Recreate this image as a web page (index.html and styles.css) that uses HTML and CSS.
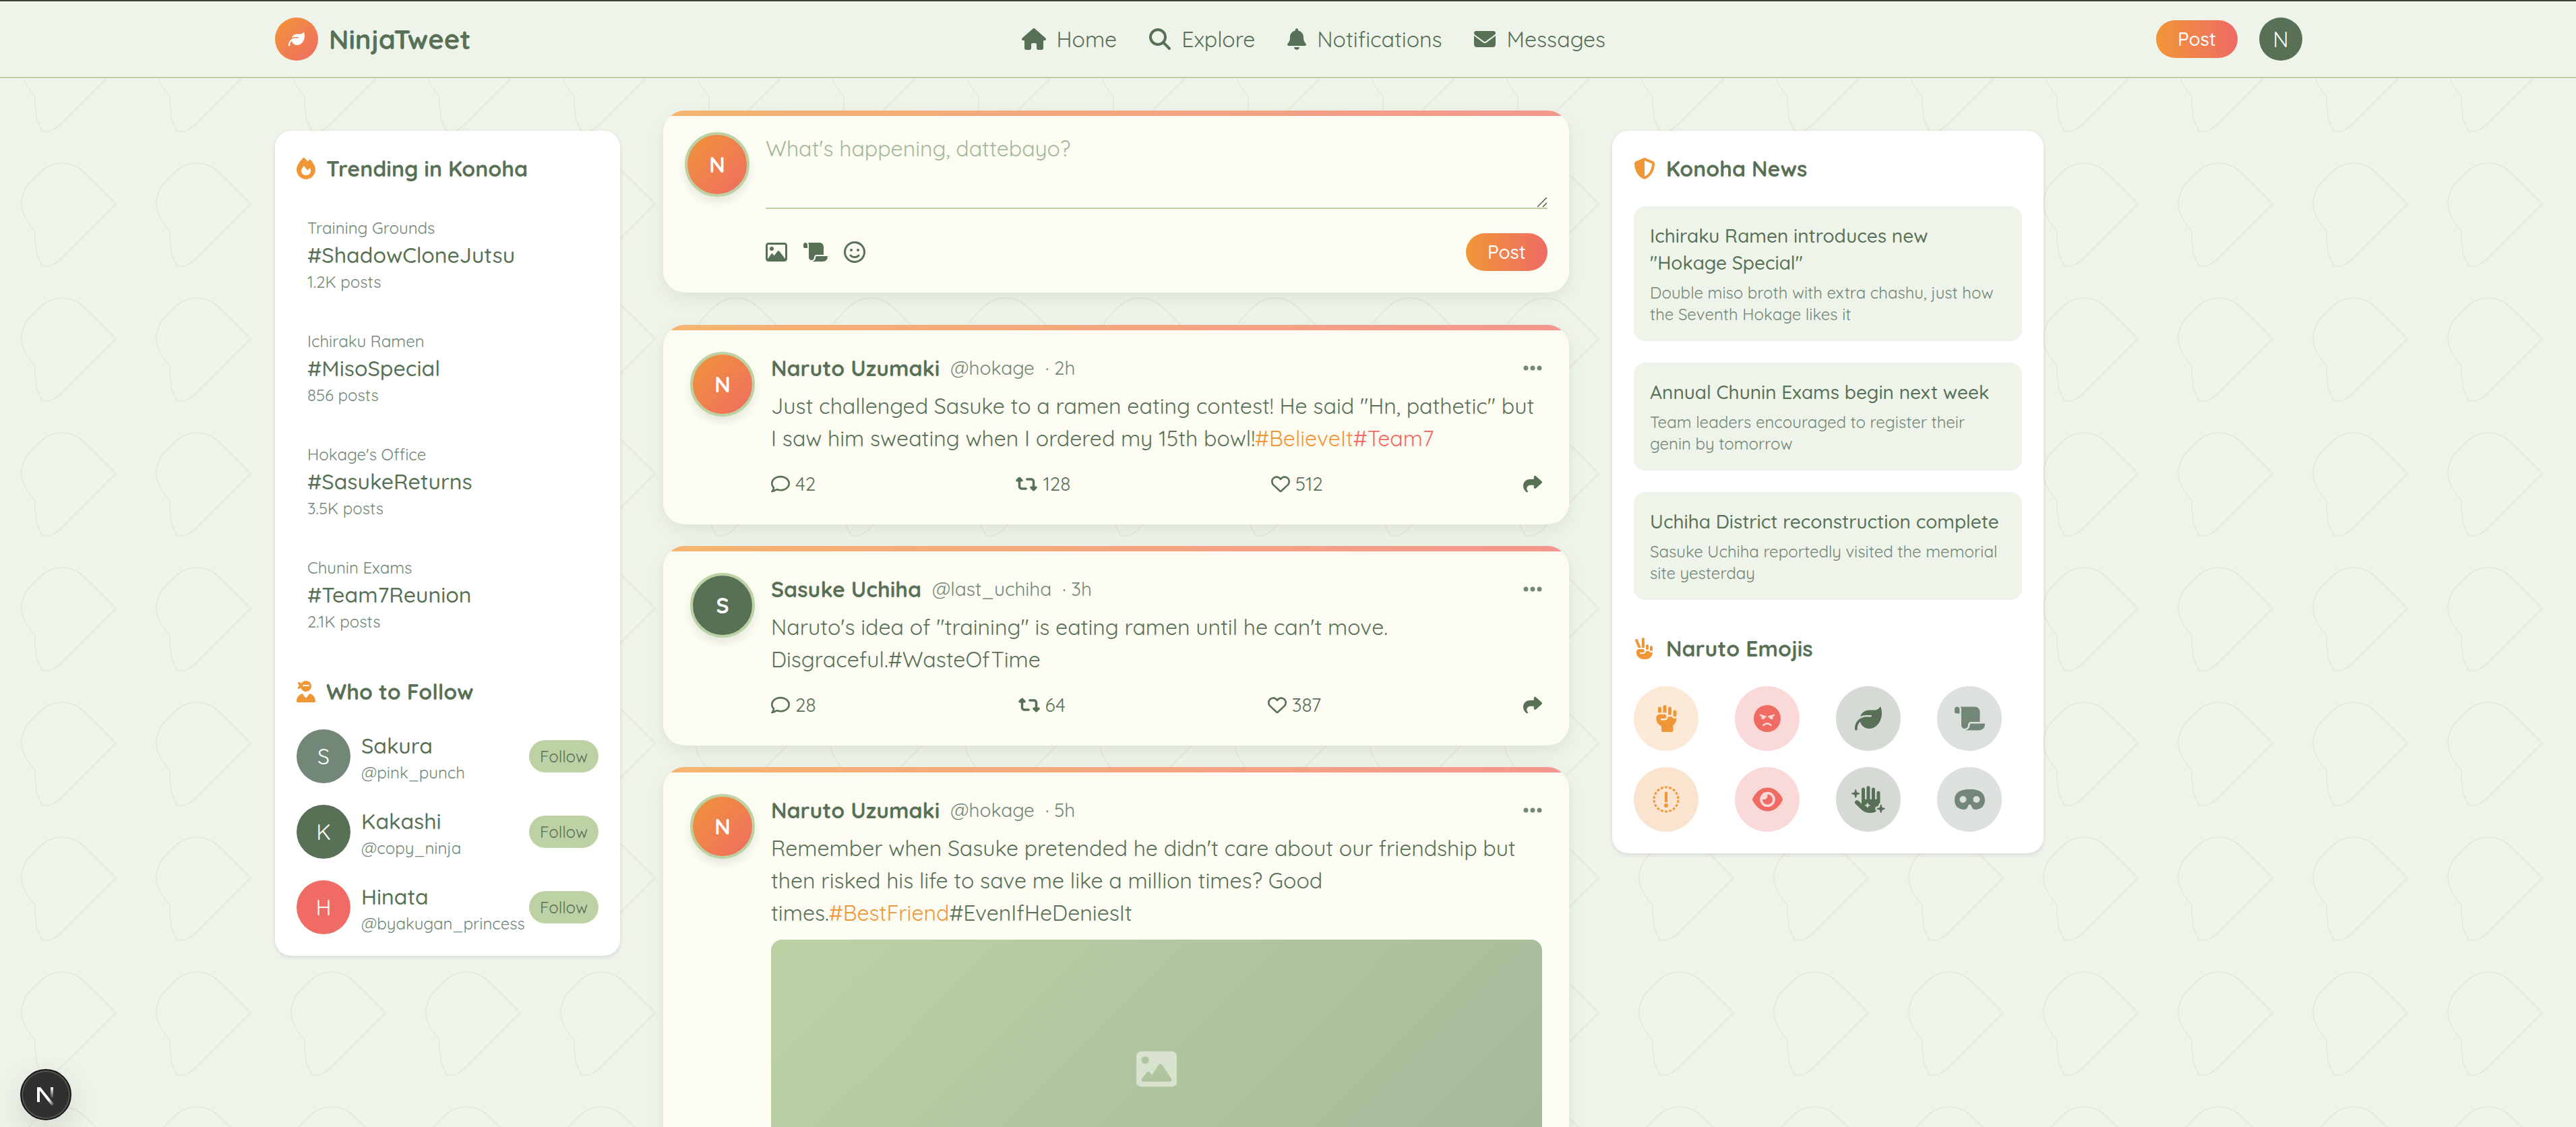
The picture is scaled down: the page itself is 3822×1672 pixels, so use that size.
FILE: index.html
```
<!DOCTYPE html>
<html lang="en">
<head>
<meta charset="utf-8">
<meta name="viewport" content="width=device-width, initial-scale=1">
<title>NinjaTweet</title>
<link rel="stylesheet" href="styles.css">
</head>
<body>
<svg class="sprite" aria-hidden="true">
  <symbol id="i-house" viewBox="0 0 576 512"><path d="M575.8 255.5c0 18-15 32.1-32 32.1h-32l.7 160.2c0 2.7-.2 5.4-.5 8.1V472c0 22.1-17.9 40-40 40H456c-1.1 0-2.2 0-3.3-.1c-1.4 .1-2.8 .1-4.2 .1H416 392c-22.1 0-40-17.9-40-40V448 384c0-17.7-14.3-32-32-32H256c-17.7 0-32 14.3-32 32v64 24c0 22.1-17.9 40-40 40H160 128.1c-1.5 0-3-.1-4.5-.2c-1.2 .1-2.4 .2-3.6 .2H104c-22.1 0-40-17.9-40-40V360c0-.9 0-1.9 .1-2.8V287.6H32c-18 0-32-14-32-32.1c0-9 3-17 10-24L266.4 8c7-7 15-8 22-8s15 2 21 7L564.8 231.5c8 7 12 15 11 24z"/></symbol>
  <symbol id="i-search" viewBox="0 0 512 512"><path d="M416 208c0 45.9-14.9 88.3-40 122.7L502.6 457.4c12.5 12.5 12.5 32.8 0 45.3s-32.8 12.5-45.3 0L330.7 376c-34.4 25.2-76.8 40-122.7 40C93.1 416 0 322.9 0 208S93.1 0 208 0S416 93.1 416 208zM208 352a144 144 0 1 0 0-288 144 144 0 1 0 0 288z"/></symbol>
  <symbol id="i-bell" viewBox="0 0 448 512"><path d="M224 0c-17.7 0-32 14.3-32 32V51.2C119 66 64 130.6 64 208v18.8c0 47-17.3 92.4-48.5 127.6l-7.4 8.3c-8.4 9.4-10.4 22.9-5.3 34.4S19.4 416 32 416H416c12.6 0 24-7.4 29.2-18.9s3.1-25-5.3-34.4l-7.4-8.3C401.3 319.2 384 273.9 384 226.8V208c0-77.4-55-142-128-156.8V32c0-17.7-14.3-32-32-32zm45.3 493.3c12-12 18.7-28.3 18.7-45.3H224 160c0 17 6.7 33.3 18.7 45.3s28.3 18.7 45.3 18.7s33.3-6.7 45.3-18.7z"/></symbol>
  <symbol id="i-envelope" viewBox="0 0 512 512"><path d="M48 64C21.5 64 0 85.5 0 112c0 15.1 7.1 29.3 19.2 38.4L236.8 313.6c11.4 8.5 27 8.5 38.4 0L492.8 150.4c12.1-9.1 19.2-23.3 19.2-38.4c0-26.5-21.5-48-48-48H48zM0 176V384c0 35.3 28.7 64 64 64H448c35.3 0 64-28.7 64-64V176L294.4 339.2c-22.8 17.1-54 17.1-76.8 0L0 176z"/></symbol>
  <symbol id="i-leaf" viewBox="0 0 512 512"><path d="M272 96c-78.6 0-145.1 51.5-167.7 122.5c33.6-17 71.5-26.5 111.7-26.5h88c8.8 0 16 7.2 16 16s-7.2 16-16 16H288 216s0 0 0 0c-16.6 0-32.7 1.9-48.3 5.4c-25.9 5.9-49.9 16.4-71.4 30.7c0 0 0 0 0 0C38.3 298.8 0 364.9 0 440v16c0 13.3 10.7 24 24 24s24-10.7 24-24V440c0-48.7 20.7-92.5 53.8-123.2C121.6 392.3 190.3 448 272 448l1 0c132.1-.7 239-130.9 239-291.4c0-42.6-7.5-83.1-21.1-119.6c-2.6-6.9-12.7-6.6-16.2-.1C455.9 72.1 418.7 96 376 96L272 96z"/></symbol>
  <symbol id="i-fire" viewBox="0 0 448 512"><path d="M159.3 5.4c7.8-7.3 19.9-7.2 27.7 .1c27.6 25.9 53.5 53.8 77.7 84c11-14.4 23.5-30.1 37-42.9c7.9-7.4 20.1-7.4 28 .1c34.6 33 63.9 76.6 84.5 118c20.3 40.8 33.8 82.5 33.8 111.9C448 404.2 348.2 512 224 512C98.4 512 0 404.1 0 276.5c0-38.4 17.8-85.3 45.4-131.7C73.3 97.7 112.7 48.6 159.3 5.4zM225.7 416c25.3 0 47.7-7 68.8-21c42.1-29.4 53.4-88.2 28.1-134.4c-4.5-9-16-9.6-22.5-2l-25.2 29.3c-6.6 7.6-18.5 7.4-24.7-.5c-16.5-21-46-58.5-62.8-79.8c-6.3-8-18.3-8.1-24.7-.1c-33.8 42.5-50.8 69.3-50.8 99.4C112 375.4 162.6 416 225.7 416z"/></symbol>
  <symbol id="i-ninja" viewBox="0 0 448 512"><path fill-rule="evenodd" d="M224 256c-57.2 0-105.6-37.5-122-89.3c-1.1 1.3-2.2 2.6-3.5 3.8c-15.8 15.5-38.8 20.7-53.6 22.1c-8.1 .8-14.6-5.7-13.8-13.8c1.4-14.7 6.6-37.8 22.1-53.6c5.8-5.9 12.6-10.1 19.6-13.4c-7-3.2-13.8-7.6-19.6-13.4C37.4 82.7 32.6 59.7 31.1 44.9c-.8-8.1 5.7-14.6 13.8-13.8c14.7 1.4 37.8 6.6 53.6 22.1c4.8 4.9 8.7 10.6 11.7 16.4C130.9 28.1 174.2 0 224 0c70.7 0 128 57.3 128 128s-57.3 128-128 128zM0 482.3C0 399.5 56.4 330 132.8 309.9c6-1.6 12.2 .9 15.9 5.8l62.5 83.3c6.4 8.5 19.2 8.5 25.6 0l62.5-83.3c3.7-4.9 9.9-7.4 15.9-5.8C391.6 330 448 399.5 448 482.3c0 16.4-13.3 29.7-29.7 29.7H29.7C13.3 512 0 498.7 0 482.3zM160 96c-8.8 0-16 7.2-16 16s7.2 16 16 16H288c8.8 0 16-7.2 16-16s-7.2-16-16-16H160z"/></symbol>
  <symbol id="i-shield" viewBox="0 0 512 512"><path fill-rule="evenodd" d="M256 0c4.6 0 9.2 1 13.4 2.9L457.7 82.8c22 9.3 38.4 31 38.3 57.2c-.5 99.2-41.3 280.7-213.6 363.2c-16.7 8-36.1 8-52.8 0C57.3 420.7 16.5 239.2 16 140c-.1-26.2 16.3-47.9 38.3-57.2L242.7 2.9C246.8 1 251.4 0 256 0zm0 66.8V444.8C394 378 431.1 230.1 432 141.4L256 66.8l0 0z"/></symbol>
  <symbol id="i-peace" viewBox="0 0 512 512"><path d="M224 0c17.7 0 32 14.3 32 32V240H192V32c0-17.7 14.3-32 32-32zm96 160c17.7 0 32 14.3 32 32v64c0 17.7-14.3 32-32 32s-32-14.3-32-32V192c0-17.7 14.3-32 32-32zm64 64c0-17.7 14.3-32 32-32s32 14.3 32 32v64c0 17.7-14.3 32-32 32s-32-14.3-32-32V224zM93.3 51.2L175.9 240H106.1L34.7 76.8C27.6 60.6 35 41.8 51.2 34.7s35.1 .3 42.1 16.5zm27 221.3l-.2-.5h69.9H216c22.1 0 40 17.9 40 40s-17.9 40-40 40H160c-8.8 0-16 7.2-16 16s7.2 16 16 16h56c39.8 0 72-32.2 72-72l0-.6c9.4 5.4 20.3 8.6 32 8.6c13.2 0 25.4-4 35.6-10.8c8.7 24.9 32.5 42.8 60.4 42.8c11.7 0 22.6-3.1 32-8.6V352c0 88.4-71.6 160-160 160H226.3c-42.4 0-83.1-16.9-113.1-46.9l-11.6-11.6C77.5 429.5 64 396.9 64 363V336c0-32.7 24.6-59.7 56.3-63.5z"/></symbol>
  <symbol id="i-scroll" viewBox="0 0 576 512"><path d="M0 80v48c0 17.7 14.3 32 32 32H48 96V80c0-26.5-21.5-48-48-48S0 53.5 0 80zM112 32c10 13.4 16 30 16 48V384c0 35.3 28.7 64 64 64s64-28.7 64-64v-5.3c0-32.4 26.3-58.7 58.7-58.7H480V128c0-53-43-96-96-96H112zM464 480c61.9 0 112-50.1 112-112c0-8.8-7.2-16-16-16H314.7c-14.7 0-26.7 11.9-26.7 26.7V384c0 53-43 96-96 96H368h96z"/></symbol>
  <symbol id="i-smile" viewBox="0 0 512 512"><path d="M464 256A208 208 0 1 0 48 256a208 208 0 1 0 416 0zM0 256a256 256 0 1 1 512 0A256 256 0 1 1 0 256zm177.6 62.1C192.8 334.5 218.8 352 256 352s63.2-17.5 78.4-33.9c9-9.7 24.2-10.4 33.9-1.4s10.4 24.2 1.4 33.9c-22 23.8-60 49.4-113.6 49.4s-91.7-25.5-113.6-49.4c-9-9.7-8.4-24.9 1.4-33.9s24.9-8.4 33.9 1.4zM144.4 208a32 32 0 1 1 64 0 32 32 0 1 1 -64 0zm192-32a32 32 0 1 1 0 64 32 32 0 1 1 0-64z"/></symbol>
  <symbol id="i-image" viewBox="0 0 512 512"><path d="M448 80c8.8 0 16 7.2 16 16V415.8l-5-6.5-136-176c-4.5-5.9-11.6-9.3-19-9.3s-14.4 3.4-19 9.3L202 340.7l-30.5-42.7C167 291.7 159.8 288 152 288s-15 3.7-19.5 10.1l-80 112L48 416.3l0-.3V96c0-8.8 7.2-16 16-16H448zM64 32C28.7 32 0 60.7 0 96V416c0 35.3 28.7 64 64 64H448c35.3 0 64-28.7 64-64V96c0-35.3-28.7-64-64-64H64zm80 192a48 48 0 1 0 0-96 48 48 0 1 0 0 96z"/></symbol>
  <symbol id="i-image-solid" viewBox="0 0 512 512"><path fill-rule="evenodd" d="M0 96C0 60.7 28.7 32 64 32H448c35.3 0 64 28.7 64 64V416c0 35.3-28.7 64-64 64H64c-35.3 0-64-28.7-64-64V96zM323.8 202.5c-4.5-6.6-11.9-10.5-19.8-10.5s-15.4 3.9-19.8 10.5l-87 127.6L170.7 297c-4.6-5.7-11.5-9-18.7-9s-14.2 3.3-18.7 9l-64 80c-5.8 7.2-6.9 17.1-2.9 25.4s12.4 13.6 21.6 13.6h96 32H424c8.9 0 17.1-4.9 21.2-12.8s3.6-17.4-1.4-24.7l-120-176zM112 192a48 48 0 1 0 0-96 48 48 0 1 0 0 96z"/></symbol>
  <symbol id="i-dots" viewBox="0 0 448 512"><path d="M8 256a56 56 0 1 1 112 0A56 56 0 1 1 8 256zm160 0a56 56 0 1 1 112 0 56 56 0 1 1 -112 0zm216-56a56 56 0 1 1 0 112 56 56 0 1 1 0-112z"/></symbol>
  <symbol id="i-comment" viewBox="0 0 512 512"><path d="M123.6 391.3c12.9-9.4 29.6-11.8 44.6-6.4c26.5 9.6 56.2 15.1 87.8 15.1c124.7 0 208-80.5 208-160s-83.3-160-208-160S48 160.5 48 240c0 32 12.4 62.8 35.7 89.2c8.6 9.7 12.8 22.5 11.8 35.5c-1.4 18.1-5.7 34.7-11.3 49.4c17-7.9 31.1-16.7 39.4-22.7zM21.2 431.9c1.8-2.7 3.5-5.4 5.1-8.1c10-16.6 19.5-38.4 21.4-62.9C17.7 326.8 0 285.1 0 240C0 125.1 114.6 32 256 32s256 93.1 256 208s-114.6 208-256 208c-37.1 0-72.3-6.4-104.1-17.9c-11.9 8.7-31.3 20.6-54.3 30.6c-15.1 6.6-32.3 12.6-50.1 16.1c-.8 .2-1.6 .3-2.4 .5c-4.4 .8-8.7 1.5-13.2 1.9c-.2 0-.5 .1-.7 .1c-5.1 .5-10.2 .8-15.3 .8c-6.5 0-12.3-3.9-14.8-9.9c-2.5-6-1.1-12.8 3.4-17.4c4.1-4.2 7.8-8.7 11.3-13.5c1.7-2.3 3.3-4.6 4.8-6.9c.1-.2 .2-.3 .3-.5z"/></symbol>
  <symbol id="i-retweet" viewBox="0 0 576 512"><path d="M272 416c17.7 0 32-14.3 32-32s-14.3-32-32-32H160c-17.7 0-32-14.3-32-32V192h32c12.9 0 24.6-7.8 29.6-19.8s2.2-25.7-6.9-34.9l-64-64c-12.5-12.5-32.8-12.5-45.3 0l-64 64c-9.2 9.2-11.9 22.9-6.9 34.9s16.6 19.8 29.6 19.8l32 0 0 128c0 53 43 96 96 96H272zM304 96c-17.7 0-32 14.3-32 32s14.3 32 32 32l112 0c17.7 0 32 14.3 32 32l0 128H416c-12.9 0-24.6 7.8-29.6 19.8s-2.2 25.7 6.9 34.9l64 64c12.5 12.5 32.8 12.5 45.3 0l64-64c9.2-9.2 11.9-22.9 6.9-34.9s-16.6-19.8-29.6-19.8l-32 0V192c0-53-43-96-96-96L304 96z"/></symbol>
  <symbol id="i-heart" viewBox="0 0 512 512"><path d="M225.8 468.2l-2.5-2.3L48.1 303.2C17.4 274.7 0 234.7 0 192.8v-3.3c0-70.4 50-130.8 119.2-144C158.6 37.9 198.9 47 231 69.6c9 6.4 17.4 13.8 25 22.3c4.2-4.8 8.7-9.2 13.5-13.3c3.7-3.2 7.5-6.2 11.5-9c0 0 0 0 0 0C313.1 47 353.4 37.9 392.8 45.4C462 58.6 512 119.1 512 189.5v3.3c0 41.9-17.4 81.9-48.1 110.4L288.7 465.9l-2.5 2.3c-8.2 7.6-19 11.9-30.2 11.9s-22-4.2-30.2-11.9zM239.1 145c-.4-.3-.7-.7-1-1.1l-17.8-20c0 0-.1-.1-.1-.1c0 0 0 0 0 0c-23.1-25.9-58-37.7-92-31.2C81.6 101.5 48 142.1 48 189.5v3.3c0 28.5 11.9 55.8 32.8 75.2L256 430.7 431.2 268c20.9-19.4 32.8-46.7 32.8-75.2v-3.3c0-47.3-33.6-88-80.1-96.9c-34-6.5-69 5.4-92 31.2c0 0 0 0-.1 .1s0 0-.1 .1l-17.8 20c-.3 .4-.7 .7-1 1.1c-4.5 4.5-10.6 7-16.9 7s-12.4-2.5-16.9-7z"/></symbol>
  <symbol id="i-share" viewBox="0 0 512 512"><path d="M307 34.8c-11.5 5.1-19 16.6-19 29.2v64H176C78.8 128 0 206.8 0 304C0 417.3 81.5 467.9 100.2 478.1c2.5 1.4 5.3 1.9 8.1 1.9c10.9 0 19.7-8.9 19.7-19.7c0-7.5-4.3-14.4-9.8-19.5C108.8 431.9 96 414.4 96 384c0-53 43-96 96-96h96v64c0 12.6 7.4 24.1 19 29.2s25 3 34.4-5.4l160-144c6.7-6.1 10.6-14.7 10.6-23.8s-3.8-17.7-10.6-23.8l-160-144c-9.4-8.5-22.9-10.6-34.4-5.4z"/></symbol>
  <symbol id="i-fist" viewBox="0 0 448 512"><path d="M192 0c17.7 0 32 14.3 32 32V144H160V32c0-17.7 14.3-32 32-32zM64 64c0-17.7 14.3-32 32-32s32 14.3 32 32v80H64V64zm192 0c0-17.7 14.3-32 32-32s32 14.3 32 32v96c0 17.7-14.3 32-32 32s-32-14.3-32-32V64zm96 64c0-17.7 14.3-32 32-32s32 14.3 32 32v64c0 17.7-14.3 32-32 32s-32-14.3-32-32V128zm-96 88l0-.6c9.4 5.4 20.3 8.6 32 8.6c13.2 0 25.4-4 35.6-10.8c8.7 24.9 32.5 42.8 60.4 42.8c11.7 0 22.6-3.1 32-8.6V256c0 52.3-25.1 98.8-64 128v96c0 17.7-14.3 32-32 32H160c-17.7 0-32-14.3-32-32V401.6c-17.3-7.9-33.2-18.8-46.9-32.5L69.5 357.5C45.5 333.5 32 300.9 32 267V240c0-35.3 28.7-64 64-64h88c22.1 0 40 17.9 40 40s-17.9 40-40 40H128c-8.8 0-16 7.2-16 16s7.2 16 16 16h56c39.8 0 72-32.2 72-72z"/></symbol>
  <symbol id="i-angry" viewBox="0 0 512 512"><path fill-rule="evenodd" d="M0 256a256 256 0 1 1 512 0A256 256 0 1 1 0 256zM338.7 395.9c6.6-5.9 7.1-16 1.2-22.6C323.8 355.4 295.7 336 256 336s-67.8 19.4-83.9 37.3c-5.9 6.6-5.4 16.7 1.2 22.6s16.7 5.4 22.6-1.2c11.7-13 31.6-26.7 60.1-26.7s48.4 13.7 60.1 26.7c5.9 6.6 16 7.1 22.6 1.2zM176.4 272c17.7 0 32-14.3 32-32c0-1.5-.1-3-.3-4.4l10.9 3.6c8.4 2.8 17.4-1.7 20.2-10.1s-1.7-17.4-10.1-20.2l-96-32c-8.4-2.8-17.4 1.7-20.2 10.1s1.7 17.4 10.1 20.2l30.7 10.2c-5.8 5.8-9.3 13.8-9.3 22.6c0 17.7 14.3 32 32 32zm192-32c0-8.9-3.6-17-9.5-22.8l30.2-10.1c8.4-2.8 12.9-11.9 10.1-20.2s-11.9-12.9-20.2-10.1l-96 32c-8.4 2.8-12.9 11.9-10.1 20.2s11.9 12.9 20.2 10.1l11.7-3.9c-.2 1.5-.3 3.1-.3 4.7c0 17.7 14.3 32 32 32s32-14.3 32-32z"/></symbol>
  <symbol id="i-alert" viewBox="0 0 40 40"><circle cx="20" cy="20" r="18" fill="none" stroke="currentColor" stroke-width="3" pathLength="180" stroke-dasharray="6 4" stroke-dashoffset="-2"/><path d="M18 9h4v15h-4z"/><circle cx="20" cy="29" r="3"/></symbol>
  <symbol id="i-eye" viewBox="0 0 576 512"><path fill-rule="evenodd" d="M288 32c-80.8 0-145.5 36.8-192.6 80.6C48.6 156 17.3 208 2.5 243.7c-3.3 7.9-3.3 16.7 0 24.6C17.3 304 48.6 356 95.4 399.4C142.5 443.2 207.2 480 288 480s145.5-36.8 192.6-80.6c46.8-43.5 78.1-95.4 93-131.1c3.3-7.9 3.3-16.7 0-24.6c-14.9-35.7-46.2-87.7-93-131.1C433.5 68.8 368.8 32 288 32zM144 256a144 144 0 1 1 288 0 144 144 0 1 1 -288 0zm144-64c0 35.3-28.7 64-64 64c-7.1 0-13.9-1.2-20.3-3.3c-5.5-1.8-11.9 1.6-11.7 7.4c.3 6.9 1.3 13.8 3.2 20.7c13.7 51.2 66.4 81.6 117.6 67.9s81.6-66.4 67.9-117.6c-11.1-41.5-47.8-69.4-88.6-71.1c-5.8-.2-9.2 6.1-7.4 11.7c2.1 6.4 3.3 13.2 3.3 20.3z"/></symbol>
  <symbol id="i-sparkles" viewBox="0 0 640 512"><path fill-rule="evenodd" d="M320 0c17.7 0 32 14.3 32 32V240c0 8.8 7.2 16 16 16s16-7.2 16-16V64c0-17.7 14.3-32 32-32s32 14.3 32 32V240c0 8.8 7.2 16 16 16s16-7.2 16-16V128c0-17.7 14.3-32 32-32s32 14.3 32 32V323.1c-11.9 4.8-21.3 14.9-25 27.8l-8.9 31.2L478.9 391C460.6 396.3 448 413 448 432c0 18.9 12.5 35.6 30.6 40.9C448.4 497.4 409.9 512 368 512H348.8c-59.6 0-116.9-22.9-160-64L76.4 341c-16-15.2-16.6-40.6-1.4-56.6s40.6-16.6 56.6-1.4l60.5 57.6c0-1.5-.1-3.1-.1-4.6V64c0-17.7 14.3-32 32-32s32 14.3 32 32V240c0 8.8 7.2 16 16 16s16-7.2 16-16V32c0-17.7 14.3-32 32-32zm-7.3 326.6c-1.1-3.9-4.7-6.6-8.7-6.6s-7.6 2.7-8.7 6.6L288 352l-25.4 7.3c-3.9 1.1-6.6 4.7-6.6 8.7s2.7 7.6 6.6 8.7L288 384l7.3 25.4c1.1 3.9 4.7 6.6 8.7 6.6s7.6-2.7 8.7-6.6L320 384l25.4-7.3c3.9-1.1 6.6-4.7 6.6-8.7s-2.7-7.6-6.6-8.7L320 352l-7.3-25.4zM104 120l48.3 13.8c4.6 1.3 7.7 5.5 7.7 10.2s-3.1 8.9-7.7 10.2L104 168 90.2 216.3c-1.3 4.6-5.5 7.7-10.2 7.7s-8.9-3.1-10.2-7.7L56 168 7.7 154.2C3.1 152.9 0 148.7 0 144s3.1-8.9 7.7-10.2L56 120 69.8 71.7C71.1 67.1 75.3 64 80 64s8.9 3.1 10.2 7.7L104 120zM584 408l48.3 13.8c4.6 1.3 7.7 5.5 7.7 10.2s-3.1 8.9-7.7 10.2L584 456l-13.8 48.3c-1.3 4.6-5.5 7.7-10.2 7.7s-8.9-3.1-10.2-7.7L536 456l-48.3-13.8c-4.6-1.3-7.7-5.5-7.7-10.2s3.1-8.9 7.7-10.2L536 408l13.8-48.3c1.3-4.6 5.5-7.7 10.2-7.7s8.9 3.1 10.2 7.7L584 408z"/></symbol>
  <symbol id="i-mask" viewBox="0 0 576 512"><path fill-rule="evenodd" d="M288 64C64 64 0 160 0 272S80 448 176 448h8.4c24.2 0 46.4-13.7 57.2-35.4l23.2-46.3c4.4-8.8 13.3-14.3 23.2-14.3s18.8 5.5 23.2 14.3l23.2 46.3c10.8 21.7 33 35.4 57.2 35.4H400c96 0 176-64 176-176s-64-208-288-208zM96 256a64 64 0 1 1 128 0A64 64 0 1 1 96 256zm320-64a64 64 0 1 1 0 128 64 64 0 1 1 0-128z"/></symbol>
</svg>

<header class="topbar">
  <div class="topbar-inner">
    <div class="brand">
      <span class="brand-mark"><svg class="icon"><use href="#i-leaf"/></svg></span>
      <span class="brand-name">NinjaTweet</span>
    </div>
    <nav class="nav">
      <a href="#home"><svg class="icon icon-wide"><use href="#i-house"/></svg>Home</a>
      <a href="#explore"><svg class="icon"><use href="#i-search"/></svg>Explore</a>
      <a href="#notifications"><svg class="icon icon-narrow"><use href="#i-bell"/></svg>Notifications</a>
      <a href="#messages"><svg class="icon"><use href="#i-envelope"/></svg>Messages</a>
    </nav>
    <div class="account">
      <button class="post-button" type="button">Post</button>
      <span class="avatar avatar-sm forest">N</span>
    </div>
  </div>
</header>

<main class="layout">
  <aside class="panel panel-left">
    <section>
      <h2 class="panel-title"><svg class="icon icon-narrow"><use href="#i-fire"/></svg>Trending in Konoha</h2>
      <ul class="trends">
        <li class="trend"><span>Training Grounds</span><strong>#ShadowCloneJutsu</strong><span>1.2K posts</span></li>
        <li class="trend"><span>Ichiraku Ramen</span><strong>#MisoSpecial</strong><span>856 posts</span></li>
        <li class="trend"><span>Hokage's Office</span><strong>#SasukeReturns</strong><span>3.5K posts</span></li>
        <li class="trend"><span>Chunin Exams</span><strong>#Team7Reunion</strong><span>2.1K posts</span></li>
      </ul>
    </section>
    <section>
      <h2 class="panel-title"><svg class="icon icon-narrow"><use href="#i-ninja"/></svg>Who to Follow</h2>
      <ul class="people">
        <li class="person">
          <span class="avatar avatar-md sage">S</span>
          <div class="person-text"><strong>Sakura</strong><span>@pink_punch</span></div>
          <button class="follow-button" type="button">Follow</button>
        </li>
        <li class="person">
          <span class="avatar avatar-md forest">K</span>
          <div class="person-text"><strong>Kakashi</strong><span>@copy_ninja</span></div>
          <button class="follow-button" type="button">Follow</button>
        </li>
        <li class="person">
          <span class="avatar avatar-md coral">H</span>
          <div class="person-text"><strong>Hinata</strong><span>@byakugan_princess</span></div>
          <button class="follow-button" type="button">Follow</button>
        </li>
      </ul>
    </section>
  </aside>

  <div class="feed">
    <form class="card composer">
      <span class="avatar avatar-lg sunset">N</span>
      <div class="composer-body">
        <textarea class="composer-input" placeholder="What's happening, dattebayo?" aria-label="What's happening, dattebayo?"></textarea>
        <div class="composer-actions">
          <div class="composer-tools">
            <button type="button" aria-label="Image"><svg class="icon"><use href="#i-image"/></svg></button>
            <button type="button" aria-label="Scroll"><svg class="icon icon-wide"><use href="#i-scroll"/></svg></button>
            <button type="button" aria-label="Emoji"><svg class="icon"><use href="#i-smile"/></svg></button>
          </div>
          <button class="post-button" type="button">Post</button>
        </div>
      </div>
    </form>

    <div class="tweets">
      <article class="card tweet">
        <span class="avatar avatar-lg sunset">N</span>
        <div class="tweet-body">
          <header class="tweet-head">
            <strong>Naruto Uzumaki</strong><span>@hokage</span><span>· 2h</span>
            <button type="button" aria-label="More"><svg class="icon icon-narrow"><use href="#i-dots"/></svg></button>
          </header>
          <p class="tweet-text">Just challenged Sasuke to a ramen eating contest! He said "Hn, pathetic" but I saw him sweating when I ordered my 15th bowl!<a class="tag-orange" href="#believeit">#BelieveIt</a><a class="tag-coral" href="#team7">#Team7</a></p>
          <div class="tweet-actions">
            <button type="button"><svg class="icon"><use href="#i-comment"/></svg>42</button>
            <button type="button"><svg class="icon icon-wide"><use href="#i-retweet"/></svg>128</button>
            <button type="button"><svg class="icon"><use href="#i-heart"/></svg>512</button>
            <button type="button" aria-label="Share"><svg class="icon"><use href="#i-share"/></svg></button>
          </div>
        </div>
      </article>

      <article class="card tweet">
        <span class="avatar avatar-lg forest">S</span>
        <div class="tweet-body">
          <header class="tweet-head">
            <strong>Sasuke Uchiha</strong><span>@last_uchiha</span><span>· 3h</span>
            <button type="button" aria-label="More"><svg class="icon icon-narrow"><use href="#i-dots"/></svg></button>
          </header>
          <p class="tweet-text">Naruto's idea of "training" is eating ramen until he can't move. Disgraceful.<a href="#wasteoftime">#WasteOfTime</a></p>
          <div class="tweet-actions">
            <button type="button"><svg class="icon"><use href="#i-comment"/></svg>28</button>
            <button type="button"><svg class="icon icon-wide"><use href="#i-retweet"/></svg>64</button>
            <button type="button"><svg class="icon"><use href="#i-heart"/></svg>387</button>
            <button type="button" aria-label="Share"><svg class="icon"><use href="#i-share"/></svg></button>
          </div>
        </div>
      </article>

      <article class="card tweet">
        <span class="avatar avatar-lg sunset">N</span>
        <div class="tweet-body">
          <header class="tweet-head">
            <strong>Naruto Uzumaki</strong><span>@hokage</span><span>· 5h</span>
            <button type="button" aria-label="More"><svg class="icon icon-narrow"><use href="#i-dots"/></svg></button>
          </header>
          <p class="tweet-text">Remember when Sasuke pretended he didn't care about our friendship but then risked his life to save me like a million times? Good times.<a class="tag-orange" href="#bestfriend">#BestFriend</a><a href="#evenifhedeniesit">#EvenIfHeDeniesIt</a></p>
          <div class="tweet-media"><svg class="icon"><use href="#i-image-solid"/></svg></div>
        </div>
      </article>
    </div>
  </div>

  <aside class="panel panel-right">
    <section>
      <h2 class="panel-title"><svg class="icon"><use href="#i-shield"/></svg>Konoha News</h2>
      <div class="news">
        <article class="news-item"><h3>Ichiraku Ramen introduces new "Hokage Special"</h3><p>Double miso broth with extra chashu, just how the Seventh Hokage likes it</p></article>
        <article class="news-item"><h3>Annual Chunin Exams begin next week</h3><p>Team leaders encouraged to register their genin by tomorrow</p></article>
        <article class="news-item"><h3>Uchiha District reconstruction complete</h3><p>Sasuke Uchiha reportedly visited the memorial site yesterday</p></article>
      </div>
    </section>
    <section>
      <h2 class="panel-title"><svg class="icon"><use href="#i-peace"/></svg>Naruto Emojis</h2>
      <div class="emojis">
        <button class="emoji orange" type="button" aria-label="Fist"><svg class="icon icon-narrow"><use href="#i-fist"/></svg></button>
        <button class="emoji red" type="button" aria-label="Angry"><svg class="icon"><use href="#i-angry"/></svg></button>
        <button class="emoji green" type="button" aria-label="Leaf"><svg class="icon"><use href="#i-leaf"/></svg></button>
        <button class="emoji gray" type="button" aria-label="Scroll"><svg class="icon icon-wide"><use href="#i-scroll"/></svg></button>
        <button class="emoji amber" type="button" aria-label="Alert"><svg class="icon"><use href="#i-alert"/></svg></button>
        <button class="emoji red" type="button" aria-label="Eye"><svg class="icon icon-wide"><use href="#i-eye"/></svg></button>
        <button class="emoji green" type="button" aria-label="Sparkling hand"><svg class="icon icon-widest"><use href="#i-sparkles"/></svg></button>
        <button class="emoji gray" type="button" aria-label="Mask"><svg class="icon icon-wide"><use href="#i-mask"/></svg></button>
      </div>
    </section>
  </aside>
</main>

<button class="dev-badge" type="button" aria-label="Developer tools">
  <svg viewBox="0 0 76 76" fill="none">
    <defs>
      <linearGradient id="badge-diagonal" x1="36" y1="40" x2="49" y2="56" gradientUnits="userSpaceOnUse"><stop offset=".4" stop-color="#fff"/><stop offset="1" stop-color="#fff" stop-opacity="0"/></linearGradient>
      <linearGradient id="badge-stem" x1="47" y1="27" x2="47" y2="44" gradientUnits="userSpaceOnUse"><stop stop-color="#fff"/><stop offset="1" stop-color="#fff" stop-opacity="0"/></linearGradient>
    </defs>
    <path d="M25 27h5l20 25-3 3-18-23v17h-4z" fill="url(#badge-diagonal)"/>
    <path d="M45 27h4v17h-4z" fill="url(#badge-stem)"/>
  </svg>
</button>
</body>
</html>
```
FILE: styles.css
```
:root {
  --forest: #587156;
  --sage: #728777;
  --leaf: #bcd2a5;
  --fern: #a3b899;
  --mint: #eff4ea;
  --cream: #fdfcf2;
  --orange: #f19637;
  --coral: #ef6b64;
}

* {
  box-sizing: border-box;
}

body {
  margin: 0;
  min-height: 100vh;
  color: var(--forest);
  font-family: "Quicksand", "Open Sans", sans-serif;
  font-size: 32px;
  line-height: 48px;
  background-color: var(--mint);
  background-image: url("data:image/svg+xml,%3Csvg xmlns='http://www.w3.org/2000/svg' width='200' height='200'%3E%3Cpath d='M172 102L132 62Q92 22 52 62Q12 102 52 142Q52 222 92 182Z' fill='none' stroke='%23cdcfae' stroke-opacity='.35' stroke-width='1.4'/%3E%3C/svg%3E");
}

h2, h3, p, ul {
  margin: 0;
  padding: 0;
}

ul {
  list-style: none;
}

a {
  color: inherit;
  text-decoration: none;
}

button {
  padding: 0;
  border: 0;
  background: none;
  color: inherit;
  font: inherit;
  cursor: pointer;
}

.sprite {
  display: none;
}

/* Icons: one em tall, with width classes for the broader and slimmer glyphs */
.icon {
  width: 32px;
  height: 32px;
  flex: none;
  fill: currentColor;
}

.icon-wide {
  width: 36px;
}

.icon-narrow {
  width: 28px;
}

/* Header */
.topbar {
  background: var(--mint);
  border-top: 2px solid #403f3a;
  border-bottom: 2px solid var(--leaf);
}

.topbar-inner {
  display: flex;
  align-items: center;
  justify-content: space-between;
  max-width: 3072px;
  margin: 0 auto;
  padding: 24px 31px 24px 33px;
}

.brand {
  display: flex;
  align-items: center;
  gap: 16px;
}

.brand-mark {
  display: grid;
  place-items: center;
  width: 64px;
  height: 64px;
  border-radius: 50%;
  color: #fff;
  background: linear-gradient(135deg, var(--orange), var(--coral));
}

.brand-mark .icon {
  width: 24px;
  height: 24px;
}

.brand-name {
  font-size: 40px;
  font-weight: 700;
}

.nav {
  display: flex;
  gap: 48px;
}

.nav a {
  display: flex;
  align-items: center;
  gap: 16px;
}

.account {
  display: flex;
  align-items: center;
  gap: 32px;
}

.post-button {
  padding: 8px 32px;
  border-radius: 32px;
  color: #fff;
  font-size: 28px;
  font-weight: 500;
  line-height: 40px;
  background: linear-gradient(90deg, var(--orange), var(--coral));
}

/* Avatars */
.avatar {
  display: grid;
  place-items: center;
  flex: none;
  border-radius: 50%;
  color: #fff;
}

.avatar-sm {
  width: 64px;
  height: 64px;
}

.avatar-md {
  width: 80px;
  height: 80px;
}

.avatar-lg {
  width: 96px;
  height: 96px;
  border: 4px solid var(--leaf);
  font-weight: 700;
  box-shadow: 0 8px 12px rgba(0, 0, 0, .08);
}

.forest {
  background: var(--forest);
}

.sage {
  background: var(--sage);
}

.coral {
  background: var(--coral);
}

.sunset {
  background: linear-gradient(135deg, var(--orange), var(--coral)) border-box;
}

/* Page columns */
.layout {
  display: flex;
  align-items: flex-start;
  gap: 64px;
  max-width: 3072px;
  margin: 0 auto;
  padding: 48px 31px 48px 33px;
}

.panel {
  display: flex;
  flex-direction: column;
  flex: none;
  gap: 48px;
  margin-top: 30px;
  padding: 32px;
  border-radius: 24px;
  background: #fff;
  box-shadow: 0 2px 6px rgba(0, 0, 0, .12);
}

.panel-left {
  width: 512px;
}

.panel-right {
  width: 640px;
}

.panel-title {
  display: flex;
  align-items: center;
  gap: 16px;
  margin-bottom: 32px;
  font-size: 32px;
  font-weight: 700;
}

.panel-title .icon {
  color: var(--orange);
}

/* Trends */
.trends {
  display: flex;
  flex-direction: column;
  gap: 24px;
}

.trend {
  display: flex;
  flex-direction: column;
  padding: 16px;
}

.trend span,
.person-text span {
  color: var(--sage);
  font-size: 24px;
  line-height: 32px;
}

.trend strong,
.person-text strong {
  font-weight: 500;
}

/* People */
.people {
  display: flex;
  flex-direction: column;
  gap: 32px;
}

.person {
  display: flex;
  align-items: center;
  gap: 16px;
}

.person-text {
  display: flex;
  flex: 1;
  flex-direction: column;
  min-width: 0;
}

.follow-button {
  flex: none;
  margin-left: -16px;
  padding: 8px 16px;
  border-radius: 24px;
  font-size: 24px;
  line-height: 32px;
  background: var(--leaf);
}

/* Feed */
.feed {
  display: flex;
  flex: 1;
  flex-direction: column;
  gap: 48px;
  min-width: 0;
  max-width: 1344px;
}

.tweets {
  display: flex;
  flex-direction: column;
  gap: 32px;
}

.card {
  position: relative;
  display: flex;
  gap: 24px;
  overflow: hidden;
  border-radius: 32px;
  background: var(--cream);
  box-shadow: 0 8px 24px rgba(88, 113, 86, .12);
}

.card::before {
  position: absolute;
  inset: 0 0 auto;
  height: 8px;
  background: linear-gradient(90deg, var(--orange), var(--coral));
  opacity: .7;
  content: "";
}

.composer {
  padding: 32px;
}

.composer-body {
  display: flex;
  flex: 1;
  flex-direction: column;
  gap: 36px;
  min-width: 0;
}

.composer-input {
  display: block;
  width: 100%;
  height: 114px;
  padding: 0;
  border: 0;
  border-bottom: 2px solid var(--leaf);
  outline: 0;
  background: transparent;
  color: inherit;
  font: inherit;
  resize: vertical;
}

.composer-input::placeholder {
  color: var(--fern);
  opacity: 1;
}

.composer-input::-webkit-resizer {
  background: url("data:image/svg+xml,%3Csvg xmlns='http://www.w3.org/2000/svg' width='15' height='15'%3E%3Cpath d='M0 14L14 0M8 14L14 8' stroke='%23555' stroke-width='1.5'/%3E%3C/svg%3E") no-repeat right bottom;
}

.composer-actions {
  display: flex;
  align-items: center;
  justify-content: space-between;
}

.composer-tools {
  display: flex;
  gap: 24px;
}

.composer-tools button {
  display: flex;
}

.tweet {
  padding: 40px;
}

.tweet-body {
  flex: 1;
  min-width: 0;
}

.tweet-head {
  display: flex;
  align-items: center;
  gap: 16px;
  margin-bottom: 8px;
}

.tweet-head strong {
  font-weight: 700;
}

.tweet-head span {
  color: var(--sage);
  font-size: 28px;
}

.tweet-head button {
  display: flex;
  margin-left: auto;
  color: var(--sage);
}

.tag-orange {
  color: var(--orange);
}

.tag-coral {
  color: var(--coral);
}

.tweet-actions {
  display: flex;
  justify-content: space-between;
  margin-top: 24px;
}

.tweet-actions button {
  display: flex;
  align-items: center;
  gap: 8px;
  font-size: 28px;
  line-height: 40px;
}

.tweet-actions .icon {
  width: 28px;
  height: 28px;
}

.tweet-actions .icon-wide {
  width: 32px;
}

.tweet-media {
  display: grid;
  place-items: center;
  height: 384px;
  margin-top: 16px;
  border-radius: 16px;
  color: rgba(255, 255, 255, .5);
  background: linear-gradient(135deg, var(--leaf), var(--fern));
}

.tweet-media .icon {
  width: 60px;
  height: 60px;
}

/* News */
.news {
  display: flex;
  flex-direction: column;
  gap: 32px;
}

.news-item {
  padding: 24px;
  border-radius: 16px;
  background: var(--mint);
}

.news-item h3 {
  margin-bottom: 8px;
  font-size: 28px;
  font-weight: 500;
  line-height: 40px;
}

.news-item p {
  color: var(--sage);
  font-size: 24px;
  line-height: 32px;
}

/* Emoji grid */
.emojis {
  display: grid;
  grid-template-columns: repeat(4, 1fr);
  gap: 24px;
}

.emoji {
  display: grid;
  place-items: center;
  width: 96px;
  height: 96px;
  border-radius: 50%;
}

.emoji .icon {
  width: 40px;
  height: 40px;
}

.emoji .icon-wide {
  width: 45px;
}

.emoji .icon-widest {
  width: 50px;
}

.emoji .icon-narrow {
  width: 35px;
}

.orange {
  color: var(--orange);
  background: #fcead7;
}

.amber {
  color: var(--orange);
  background: #fae4cf;
}

.red {
  color: var(--coral);
  background: #f9dad9;
}

.green {
  color: var(--forest);
  background: #d5dad4;
}

.gray {
  color: var(--sage);
  background: #dce1de;
}

/* Developer badge floating over the page */
.dev-badge {
  position: fixed;
  bottom: 10px;
  left: 30px;
  width: 76px;
  height: 76px;
  border: 2px solid #171717;
  border-radius: 50%;
  background: #30302e;
  box-shadow: inset 0 0 0 2px #555553, 0 16px 48px rgba(0, 0, 0, .12);
}

.dev-badge svg {
  display: block;
  width: 76px;
  height: 76px;
  margin: -2px;
}
```
